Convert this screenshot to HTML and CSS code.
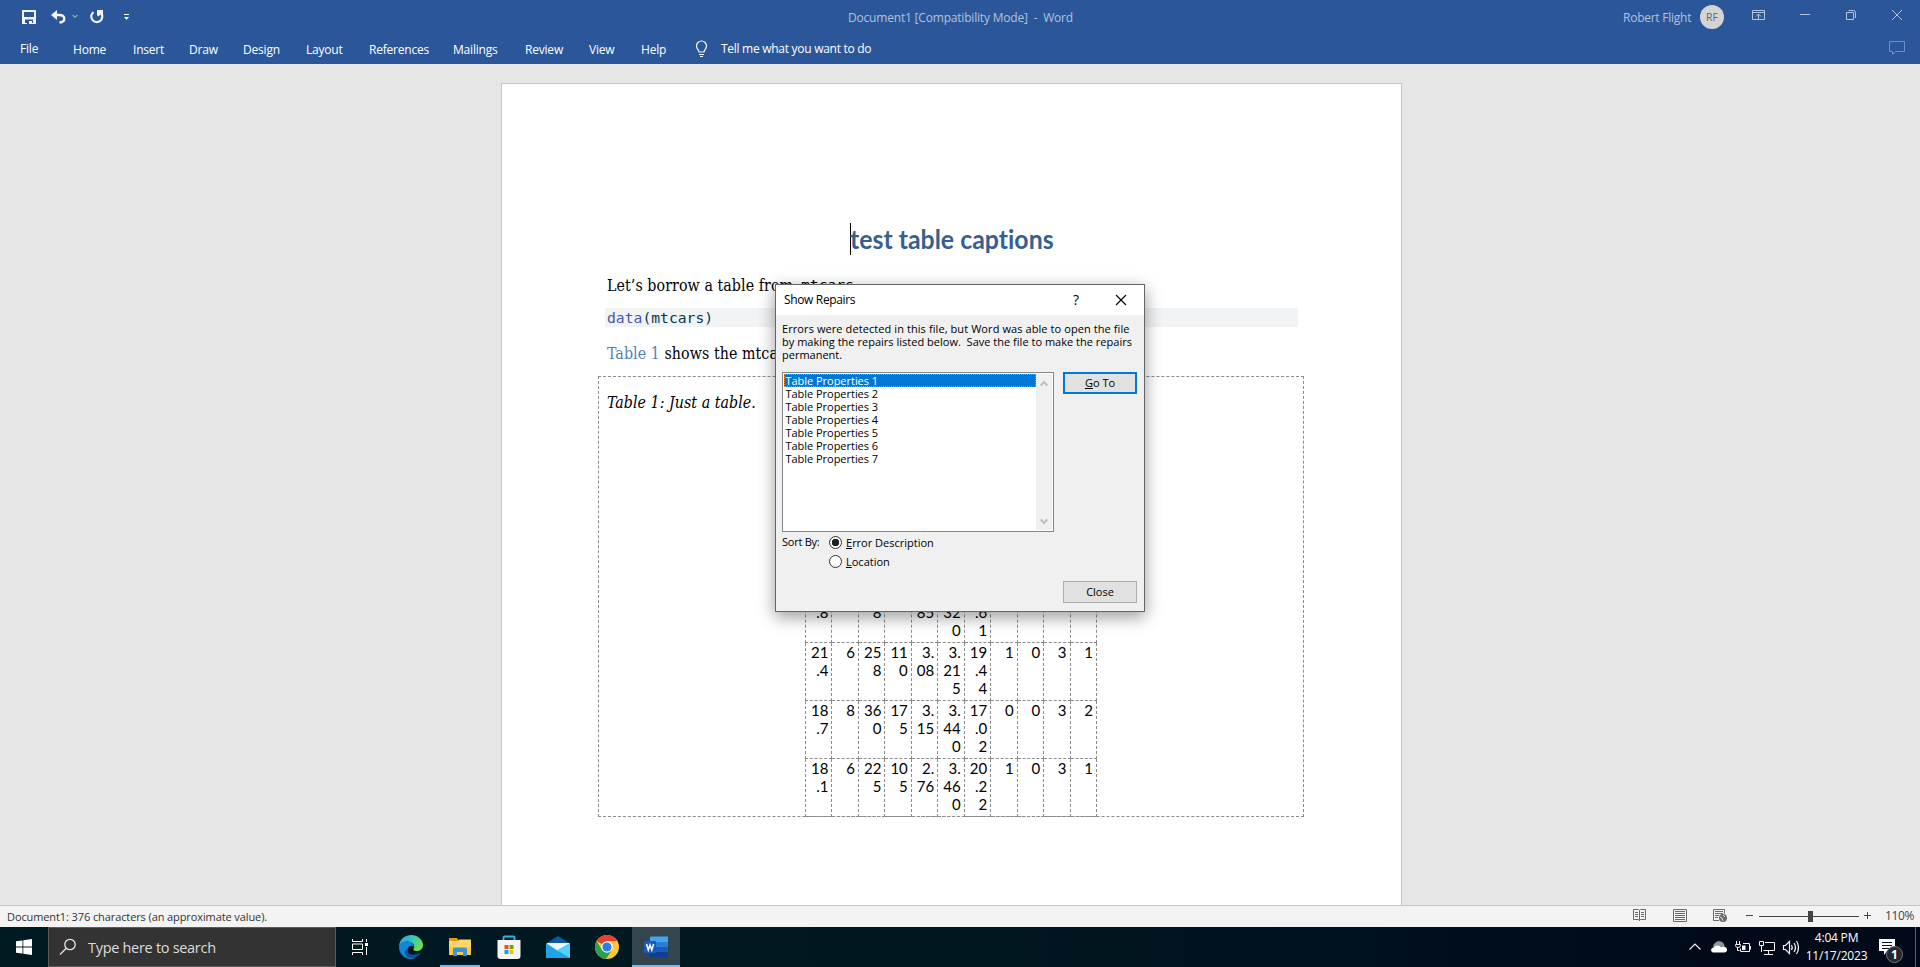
FILE: index.html
```html
<!DOCTYPE html>
<html lang="en">
<head>
<meta charset="utf-8">
<title>Document1 - Word</title>
<link rel="stylesheet" href="styles.css">
</head>
<body>
<div class="screen">
  <header class="ribbon">
    <div class="titlebar">
      <svg class="quick" width="150" height="34" viewBox="0 0 150 34">
        <path d="M22 10h14v14H22z" fill="#f4f6fa"/><path d="M24 12h10v5H24z M25 19.500h8V23h-8z" fill="#2b579a"/><path d="M27 21h2v3h-2z" fill="#2b579a"/><path d="M29 21h3v2h-3z" fill="#f4f6fa"/>
        <path d="M57 10l-6 5 6 5z" fill="#f4f6fa"/><path d="M54 15h5c7 0 7 7 .5 7.500" fill="none" stroke="#f4f6fa" stroke-width="2.300"/>
        <path d="M72.500 15l2.500 2.300 2.500-2.300" fill="none" stroke="#8ba4cb" stroke-width="1.200"/>
        <path d="M93.500 12.100A5.500 5.500 0 1 0 101 13" fill="none" stroke="#f4f6fa" stroke-width="2.200"/><path d="M97 10h6v6l-2-2-2.500 2.500-1.500-1.500z" fill="#f4f6fa"/>
        <path d="M124 14.500h5" stroke="#f4f6fa"/><path d="M124 17h5l-2.500 3z" fill="#f4f6fa"/>
      </svg>
      <span class="doc-title">Document1 [Compatibility Mode]&nbsp; -&nbsp; Word</span>
      <span class="user">Robert Flight</span>
      <span class="avatar">RF</span>
      <svg class="winctl" width="196" height="34" viewBox="1724 0 196 34" fill="none" stroke="#b5c5de">
        <path d="M1752.500 10.500h12v9h-12z M1752.500 12.500h12 M1758.500 19v-5 M1756 16.500l2.500-2.500 2.500 2.500"/>
        <path d="M1800 14.500h10"/>
        <path d="M1846.500 12.500h7v7h-7z M1848.500 10.500h5q2 0 2 2v5.500"/>
        <path d="M1892 10l10 10 M1902 10l-10 10"/>
      </svg>
    </div>
    <nav class="tabs">
      <span class="file">File</span><span>Home</span><span>Insert</span><span>Draw</span><span>Design</span><span>Layout</span><span class="t-ref">References</span><span>Mailings</span><span>Review</span><span>View</span><span>Help</span>
      <svg width="26" height="30" viewBox="695 34 26 30" fill="none" stroke="#f4f6fa" stroke-width="1.200"><path d="M699 52c0-2-2.500-3-2.500-6a5 5 0 0 1 10 0c0 3-2.500 4-2.500 6z M699 54.500h5 M700 56.500h3"/></svg>
      <span class="tell">Tell me what you want to do</span>
      <svg class="comment" width="18" height="30" viewBox="1888 34 18 30" fill="none" stroke="#6f8fc0"><path d="M1889.500 41.500h15v10h-9l-3 3v-3h-3z"/></svg>
    </nav>
  </header>

  <main class="workspace">
    <article class="page">
      <h1><span class="caret"></span><span class="h1text">test table captions</span></h1>
      <p class="para p1"><span class="p1a">Let’s borrow a table from </span><code>mtcars</code></p>
      <pre class="code"><span class="fn">data</span>(mtcars)</pre>
      <p class="para p2"><a>Table 1</a> shows the mtcars data.</p>
      <section class="outer">
        <p class="caption">Table 1: Just a table.</p>
        <table class="cars">
          <colgroup><col class="a"><col class="b"><col class="a"><col class="b"><col class="a"><col class="b"><col class="a"><col class="b"><col class="a"><col class="b"><col class="a"></colgroup>
          <tr><td>22<br>.8</td><td>4</td><td>10<br>8</td><td>93</td><td>3.<br>85</td><td>2.<br>32<br>0</td><td>18<br>.6<br>1</td><td>1</td><td>1</td><td>4</td><td>1</td></tr>
          <tr><td>21<br>.4</td><td>6</td><td>25<br>8</td><td>11<br>0</td><td>3.<br>08</td><td>3.<br>21<br>5</td><td>19<br>.4<br>4</td><td>1</td><td>0</td><td>3</td><td>1</td></tr>
          <tr><td>18<br>.7</td><td>8</td><td>36<br>0</td><td>17<br>5</td><td>3.<br>15</td><td>3.<br>44<br>0</td><td>17<br>.0<br>2</td><td>0</td><td>0</td><td>3</td><td>2</td></tr>
          <tr><td>18<br>.1</td><td>6</td><td>22<br>5</td><td>10<br>5</td><td>2.<br>76</td><td>3.<br>46<br>0</td><td>20<br>.2<br>2</td><td>1</td><td>0</td><td>3</td><td>1</td></tr>
        </table>
      </section>
    </article>
  </main>

  <footer class="status">
    <span class="msg">Document1: 376 characters (an approximate value).</span>
    <svg width="245" height="21" viewBox="1630 906 245 21" fill="none" stroke="#6a6a6a">
      <path d="M1633.500 909.500h5l1 1 1-1h5v10h-5l-1 1-1-1h-5z M1639.500 910v11 M1635 912.500h3 M1635 914.500h3 M1635 916.500h3 M1641 912.500h3 M1641 914.500h3 M1641 916.500h3"/>
      <path d="M1673.500 909.500h13v12h-13z M1675 911.500h10 M1675 913.500h10 M1675 915.500h10 M1675 917.500h10 M1675 919.500h10"/>
      <path d="M1719 920.500h-5.500v-11h11v4 M1715 911.500h8 M1715 913.500h8 M1715 915.500h4 M1715 917.500h3"/><circle cx="1723" cy="918" r="4" fill="#6a6a6a" stroke="none"/><path d="M1720 917l2 1 1 3 M1723 915l2 2" stroke="#ddd"/>
      <path d="M1746 915.500h7 M1759 916.500h100 M1864 915.500h7 M1867.500 912v7" stroke="#444"/><path d="M1808 911h5v11h-5z" fill="#444" stroke="none"/>
    </svg>
    <span class="zoom">110%</span>
  </footer>

  <footer class="taskbar">
    <div class="start"><svg width="16" height="16" viewBox="0 0 16 16" fill="#fff"><path d="M0 2.300l6.500-.9v6.200H0z M7.300 1.200L16 0v7.600H7.300z M0 8.400h6.500v6.200L0 13.700z M7.300 8.400H16V16l-8.700-1.200z"/></svg></div>
    <div class="search">
      <svg width="18" height="18" viewBox="0 0 18 18" fill="none" stroke="#e6e6e6" stroke-width="1.300"><circle cx="11" cy="6.500" r="5.200"/><path d="M7.300 10.300L1 16.500"/></svg>
      <span>Type here to search</span>
    </div>
    <div class="app tv"><svg width="16" height="16" viewBox="0 0 16 16" fill="none" stroke="#fff"><path d="M.5 0v2.500h10V0 M.5 5h10v5.500H.5z M.5 16v-2.500h10V16 M14.500 0v3 M14.500 8v8"/><path d="M13 4h3v3h-3z" fill="#fff" stroke="none"/></svg></div>
    <div class="app edge"><svg width="24" height="24" viewBox="0 0 24 24">
      <defs><linearGradient id="eg" x1="0" x2="1" y1="0" y2=".5"><stop offset="0" stop-color="#2c9ee0"/><stop offset=".5" stop-color="#35c1c5"/><stop offset="1" stop-color="#6be04a"/></linearGradient></defs>
      <path d="M0 12C0 3.500 7 0 12 0c7 0 12 5 12 10 0 4-3 6-6.500 6-2.500 0-3.500-1-3-2 2.500-4-1.500-7.500-6-7.500C4 6.500 0 9 0 12z" fill="url(#eg)"/>
      <path d="M0 12c0-3.500 4-5.800 8.500-5.800 4 0 6.500 2.500 6.300 5C12 9.500 8.500 12 8.500 15.500c0 4.500 4 8 8.500 7.200C9 26.500 0 21 0 12z" fill="#1286d8"/>
      <path d="M8.700 13.500C7 19 13 22 22 17.500c-2.500 5-8.500 6.500-12 5.300-5-2-5.500-7-1.300-9.300z" fill="#0c529e"/></svg></div>
    <div class="app run"><svg width="22" height="20" viewBox="0 0 22 20">
      <path d="M0 1h8l2 3H0z" fill="#e59c0c"/><path d="M0 4l9 0 1-1.500h12V18H0z" fill="#ffd768"/><path d="M0 10h22v8H0z" fill="#fbc940"/><path d="M4 12.500q0-2 2-2h10q2 0 2 2V19h-4v-4H8v4H4z" fill="#3e94d8"/></svg></div>
    <div class="app store"><svg width="24" height="24" viewBox="0 0 24 24">
      <path d="M6.500 6V2.800q0-1.300 1.300-1.300h8.400q1.300 0 1.300 1.300V6" fill="none" stroke="#29b6ea" stroke-width="2"/><path d="M.5 5h23v16q0 3-3 3h-17q-3 0-3-3z" fill="#f4f4f4"/>
      <path d="M7.500 10h4v4h-4z" fill="#f25022"/><path d="M12.500 10h4v4h-4z" fill="#5fb000"/><path d="M7.500 15h4v4h-4z" fill="#00a4ef"/><path d="M12.500 15h4v4h-4z" fill="#ffb900"/></svg></div>
    <div class="app mail"><svg width="24" height="24" viewBox="0 0 24 24"><path d="M0 8.500L12 1l12 7.500z" fill="#0c59a4"/><path d="M1 8h22v8H1z" fill="#f5f5f5"/><path d="M0 8l12 8L24 8v15H0z" fill="#1fa4e8"/><path d="M24 8v15L11 15.300z" fill="#50d1fa"/></svg></div>
    <div class="app chrome"><svg width="24" height="24" viewBox="0 0 24 24"><circle cx="12" cy="12" r="12" fill="#fcc934"/><path d="M12 12L1.600 6A12 12 0 0 1 22.400 6H12z" fill="#e8402f"/><path d="M1.600 6A12 12 0 0 0 11 24l6-9-5 2-5-2z" fill="#2aa14f"/><circle cx="12" cy="12" r="5.800" fill="#fff"/><circle cx="12" cy="12" r="4.600" fill="#2f7ce8"/></svg></div>
    <div class="app run active"><svg width="24" height="22" viewBox="0 0 24 22"><path d="M6 1.500Q6 .5 7 .5h17V6H6z" fill="#41a5ee"/><path d="M6 6h18v5H6z" fill="#2b7cd3"/><path d="M6 11h18v5H6z" fill="#185abd"/><path d="M6 16h18v5.500H7q-1 0-1-1z" fill="#103f91"/><rect y="5" width="12" height="12" rx="1" fill="#185abd"/><path d="M2.500 8l1.800 6L6 9l1.800 5 1.800-6" fill="none" stroke="#fff" stroke-width="1.500"/></svg></div>
    <div class="tray">
      <svg width="124" height="40" viewBox="1680 927 124 40" fill="none" stroke="#f2f2f2" stroke-width="1.200">
        <path d="M1689.500 949.500l5.500-5.500 5.500 5.500"/>
        <path d="M1714 949a4 4 0 0 1 1-6 5.500 5.500 0 0 1 9 1l1 4z" fill="#8f949b" stroke="none"/><path d="M1713.500 952.500c-3.500-.5-3-5 .5-5 1.500-3 6-2.500 7 0 3-2 6.500 0 6 2.500 0 1.500-1 2.500-2.500 2.500z" fill="#fff" stroke="none"/>
        <g stroke-width="1"><path d="M1743 943.500h6.500v8H1740.500v-3 M1750.500 946v3.500 M1736.500 941v3 M1739.500 941v3 M1735.500 944.500h5v1q0 2-2.500 2t-2.500-2z M1737.500 947.500v3h2"/><path d="M1742 945.500h3.500v4.500h-3.500z" fill="#fff" stroke="none"/>
        <path d="M1765 942.500h9.500v8H1763.500 M1759.500 941.500h4v4h-4z M1761.500 946v6 M1768.500 951v3 M1764 954.500h9"/></g>
        <path d="M1783.500 945.500h2l4-4v12l-4-4h-2z M1791.500 945q1.500 2.500 0 5 M1794 943q3 4.500 0 9 M1796.500 941q4 6.500 0 13"/>
      </svg>
      <div class="clock"><span>4:04 PM</span><span class="date">11/17/2023</span></div>
      <svg width="48" height="40" viewBox="1872 927 48 40"><path d="M1879 939h16v12h-8l-3 4v-4h-5z" fill="#fff"/><path d="M1882 942.500h10 M1882 945.500h10 M1882 948.500h7" stroke="#001020"/><circle cx="1894.500" cy="954.500" r="8" fill="#25272b" stroke="#70757b"/><text class="badge" x="1894.500" y="959">1</text><path d="M1915.500 927v40" stroke="#566069"/></svg>
    </div>
  </footer>

  <div class="dialog">
    <div class="dlg-title"><span class="dt">Show Repairs</span><span class="q">?</span><svg width="12" height="12" viewBox="0 0 12 12" stroke="#000" stroke-width="1.100"><path d="M1 1l10 10 M11 1L1 11"/></svg></div>
    <div class="dlg-body">
      <p class="info"><span class="l1">Errors were detected in this file, but Word was able to open the file</span><br><span class="l2">by making the repairs listed below.&nbsp; Save the file to make the repairs</span><br>permanent.</p>
      <div class="row">
        <div class="listbox">
          <ul><li class="sel">Table Properties 1</li><li>Table Properties 2</li><li>Table Properties 3</li><li>Table Properties 4</li><li>Table Properties 5</li><li>Table Properties 6</li><li>Table Properties 7</li></ul>
          <div class="scroll"><svg width="8" height="7" viewBox="0 0 8 7"><path d="M.7 5.500L4 2l3.300 3.500"/></svg><svg width="8" height="7" viewBox="0 0 8 7"><path d="M.7 1.500L4 5l3.300-3.500"/></svg></div>
        </div>
        <div class="btn primary"><u>G</u>o To</div>
      </div>
      <div class="sort">
        <span class="sb">Sort By:</span>
        <div class="radios"><label><i class="radio on"></i><span><u>E</u>rror Description</span></label><label><i class="radio"></i><span><u>L</u>ocation</span></label></div>
      </div>
      <div class="btn close">Close</div>
    </div>
  </div>
</div>
</body>
</html>
```
FILE: styles.css
```css
* { box-sizing: border-box; }
body { margin: 0; font-family: "Open Sans", "Noto Sans", sans-serif; font-size: 12px; }
p, h1, pre, ul { margin: 0; padding: 0; }
svg { display: block; flex: none; }
.screen { width: 1920px; height: 967px; display: flex; flex-direction: column; overflow: hidden; position: relative; background: #e6e6e6; }

/* Ribbon */
.ribbon { height: 64px; background: #2b579a; color: #fff; flex: none; }
.titlebar { height: 34px; display: flex; align-items: flex-start; color: #b1c2dd; }
.titlebar span { white-space: nowrap; line-height: 16px; }
.doc-title { margin: 10px 0 0 698px; width: 775px; letter-spacing: -0.190px; }
.user { width: 77px; margin-top: 10px; letter-spacing: -0.250px; }
.titlebar .avatar { width: 24px; height: 24px; margin-top: 5px; border-radius: 50%; background: #d4d4d4; color: #666; font-size: 10.500px; line-height: 24px; text-align: center; }
.tabs { height: 30px; display: flex; white-space: nowrap; letter-spacing: -0.200px; }
.tabs span { line-height: 16px; padding-top: 8px; width: 53px; }
.tabs span:nth-of-type(1) { margin-left: 20px; padding-top: 7px; }
.tabs span:nth-of-type(2) { width: 60px; }
.tabs span:nth-of-type(3) { width: 56px; }
.tabs span:nth-of-type(4) { width: 54px; }
.tabs span:nth-of-type(5) { width: 63px; }
.tabs span:nth-of-type(6) { width: 63px; }
.tabs span:nth-of-type(7) { width: 84px; }
.tabs span:nth-of-type(8) { width: 72px; }
.tabs span:nth-of-type(9) { width: 64px; }
.tabs span:nth-of-type(10) { width: 52px; }
.tabs span:nth-of-type(11) { width: 54px; }
.tabs .tell { padding-top: 7px; width: 1167px; letter-spacing: -0.280px; }

/* Document */
.workspace { flex: 1; padding: 19px 0 0 501px; overflow: hidden; min-height: 0; }
.page { width: 901px; height: 900px; background: #fff; border: 1px solid #c6c6c6; padding: 139px 96px 0 96px; }
h1 { height: 33px; display: flex; margin-left: 252px; color: #365f91; font: bold 26px/33px Lato, sans-serif; }
.caret { width: 1px; height: 32px; background: #000; margin-right: -1px; }
.h1text { white-space: nowrap; transform: scaleX(.957); transform-origin: 0 0; font-variant-ligatures: none; }
.para { font: 15.800px/24px "DejaVu Serif Condensed", "DejaVu Serif", serif; font-stretch: condensed; letter-spacing: 0.080px; color: #000; padding-left: 9px; white-space: nowrap; }
.p1 { margin-top: 18px; height: 34px; display: flex; }
.p1a { width: 194px; }
.p1 code { font: 14.700px/22px "DejaVu Sans Mono", monospace; letter-spacing: 0; }
.code { height: 19px; margin: 0 7px 0 7px; padding-left: 2px; background: #f1f3f5; color: #003b4f; font: 14.700px/19px "DejaVu Sans Mono", monospace; }
.fn { color: #4758ab; }
.p2 { margin-top: 15px; height: 34px; }
.p2 a { color: #4f81bd; }
.outer { width: 706px; height: 441px; border: 1px dashed #8c8c8c; display: flex; flex-direction: column; justify-content: space-between; }
.caption { font: italic 15.800px/24px "DejaVu Serif Condensed", "DejaVu Serif", serif; font-stretch: condensed; letter-spacing: 0.050px; padding: 14px 0 0 8px; white-space: nowrap; }
.cars { width: 292px; margin-left: 206px; margin-bottom: -1px; border-collapse: collapse; table-layout: fixed; font: 15px/18.200px Lato, sans-serif; }
.cars td { border: 1px dashed #8c8c8c; height: 58px; padding: 0 3px 0 0; text-align: right; vertical-align: top; }

/* Status bar */
.status { height: 22px; flex: none; display: flex; background: #f3f3f3; border-top: 1px solid #c6c6c6; color: #333; }
.msg { width: 1630px; flex: none; padding-left: 7px; font-size: 11px; line-height: 21px; white-space: nowrap; letter-spacing: -0.100px; }
.zoom { color: #444; line-height: 19px; padding-left: 10px; letter-spacing: -0.400px; }

/* Taskbar */
.taskbar { height: 40px; flex: none; display: flex; background: linear-gradient(90deg, #001a22, #001720 50%, #000b1a 85%, #000a18); color: #fff; }
.start { width: 48px; display: flex; align-items: center; justify-content: center; }
.search { width: 288px; background: #333; border: 1px solid #5c5c5c; display: flex; padding: 10px 0 0 10px; color: #dcdcdc; }
.search span { font-size: 14.500px; line-height: 20px; margin-left: 11px; white-space: nowrap; letter-spacing: -0.300px; }
.app { flex: none; display: flex; align-items: center; justify-content: center; }
.tv { width: 48px; }
.edge { width: 56px; padding-right: 2px; }
.run { border-bottom: 2px solid #76b9ed; width: 40px; padding-top: 1px; }
.store { width: 57px; }
.mail { width: 42px; }
.chrome { width: 53px; padding-left: 3px; }
.active { width: 48px; background: #33464f; }
.tray { margin-left: auto; display: flex; }
.clock { width: 68px; display: flex; flex-direction: column; align-items: center; line-height: 18px; padding: 2px 3px 0 0; white-space: nowrap; letter-spacing: -0.200px; }
.badge { font: bold 12px "Open Sans", sans-serif; fill: #fff; text-anchor: middle; }

/* Repair dialog floats over the document */
.dialog { position: absolute; left: 775px; top: 284px; width: 370px; height: 328px; border: 1px solid #666; background: #f0f0f0; box-shadow: 0 5px 16px rgba(0,0,0,.4); color: #000; font-size: 11px; line-height: 13px; }
.dlg-title { height: 30px; background: #fff; display: flex; align-items: center; padding: 0 0 1px 8px; font-size: 12px; }
.dt { width: 289px; letter-spacing: -0.350px; }
.q { width: 42px; font-size: 14px; }
.dlg-body { padding: 7px 7px 0 6px; white-space: nowrap; }
.l1 { letter-spacing: 0.085px; }
.l2 { letter-spacing: 0.015px; }
.row { display: flex; justify-content: space-between; margin-top: 11px; }
.info { height: 39px; }
.listbox { width: 272px; height: 160px; border: 1px solid #828790; background: #fff; padding: 1px; display: flex; }
.listbox ul { width: 252px; flex: none; list-style: none; }
.listbox li { height: 13px; padding-left: 1.500px; letter-spacing: -0.030px; }
.listbox .sel { background: #0078d7; color: #fff; outline: 1px dotted #e8832a; outline-offset: -1px; }
.scroll { width: 16px; margin-left: auto; background: #f0f0f0; display: flex; flex-direction: column; justify-content: space-between; align-items: center; padding: 6px 0 5px; fill: none; stroke: #bfbfbf; stroke-width: 2; }
.btn { width: 74px; height: 22px; border: 1px solid #adadad; background: #e1e1e1; text-align: center; line-height: 20px; }
.primary { border: 2px solid #0078d7; line-height: 18px; }
.sort { display: flex; margin-top: 4px; height: 45px; }
.sb { width: 47px; letter-spacing: -0.250px; margin-top: -1px; }
.radios label { display: flex; height: 19px; gap: 4px; line-height: 13px; }
.radio { width: 13px; height: 13px; border: 1px solid #333; border-radius: 50%; background: #fff; }
.on { background: radial-gradient(circle, #222 0 3.500px, #fff 4px); }
.close { margin-left: auto; }
```
